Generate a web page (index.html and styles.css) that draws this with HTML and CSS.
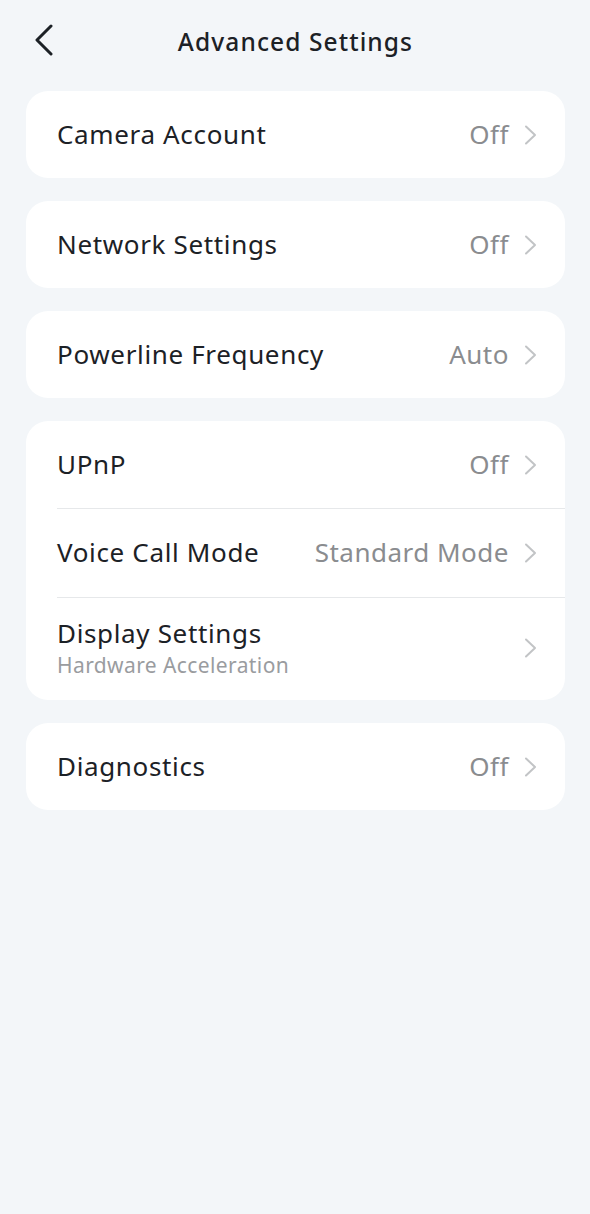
FILE: index.html
```html
<!DOCTYPE html>
<html>
<head>
<meta charset="utf-8">
<link rel="stylesheet" href="styles.css">
</head>
<body>
<div class="page">
  <header class="topbar">
    <svg class="back" width="20" height="32" viewBox="0 0 20 32"><path d="M17 2 L3 16 L17 30" fill="none" stroke="#1c2126" stroke-width="3" stroke-linecap="round" stroke-linejoin="round"/></svg>
    <h1 class="title">Advanced Settings</h1>
  </header>
  <main class="list">
    <section class="card">
      <div class="row"><span class="label">Camera Account</span><span class="value">Off</span><svg class="chev" width="14" height="20" viewBox="0 0 14 20"><path d="M2 1.5 L11 10 L2 18.5" fill="none" stroke="#c2c4c6" stroke-width="2" stroke-linecap="round" stroke-linejoin="round"/></svg></div>
    </section>
    <section class="card">
      <div class="row"><span class="label">Network Settings</span><span class="value">Off</span><svg class="chev" width="14" height="20" viewBox="0 0 14 20"><path d="M2 1.5 L11 10 L2 18.5" fill="none" stroke="#c2c4c6" stroke-width="2" stroke-linecap="round" stroke-linejoin="round"/></svg></div>
    </section>
    <section class="card">
      <div class="row"><span class="label">Powerline Frequency</span><span class="value">Auto</span><svg class="chev" width="14" height="20" viewBox="0 0 14 20"><path d="M2 1.5 L11 10 L2 18.5" fill="none" stroke="#c2c4c6" stroke-width="2" stroke-linecap="round" stroke-linejoin="round"/></svg></div>
    </section>
    <section class="card">
      <div class="row"><span class="label">UPnP</span><span class="value">Off</span><svg class="chev" width="14" height="20" viewBox="0 0 14 20"><path d="M2 1.5 L11 10 L2 18.5" fill="none" stroke="#c2c4c6" stroke-width="2" stroke-linecap="round" stroke-linejoin="round"/></svg></div>
      <div class="row divided"><span class="label">Voice Call Mode</span><span class="value">Standard Mode</span><svg class="chev" width="14" height="20" viewBox="0 0 14 20"><path d="M2 1.5 L11 10 L2 18.5" fill="none" stroke="#c2c4c6" stroke-width="2" stroke-linecap="round" stroke-linejoin="round"/></svg></div>
      <div class="row divided tall"><div class="stack"><span class="label">Display Settings</span><span class="sub">Hardware Acceleration</span></div><svg class="chev" width="14" height="20" viewBox="0 0 14 20"><path d="M2 1.5 L11 10 L2 18.5" fill="none" stroke="#c2c4c6" stroke-width="2" stroke-linecap="round" stroke-linejoin="round"/></svg></div>
    </section>
    <section class="card">
      <div class="row"><span class="label">Diagnostics</span><span class="value">Off</span><svg class="chev" width="14" height="20" viewBox="0 0 14 20"><path d="M2 1.5 L11 10 L2 18.5" fill="none" stroke="#c2c4c6" stroke-width="2" stroke-linecap="round" stroke-linejoin="round"/></svg></div>
    </section>
  </main>
</div>
</body>
</html>
```
FILE: styles.css
```css
html, body {
  margin: 0;
  padding: 0;
  background: #f3f6f9;
}
body {
  font-family: "Noto Sans", "Open Sans", sans-serif;
  color: #1c2126;
  width: 590px;
  min-height: 1214px;
}
.page {
  padding: 0 25px 0 26px;
}
.topbar {
  height: 82px;
  box-sizing: border-box;
  padding-top: 1px;
  display: flex;
  align-items: center;
  justify-content: center;
  position: relative;
}
.back {
  position: absolute;
  left: 8px;
  top: 24px;
}
.title {
  margin: 0;
  font-size: 24.5px;
  font-weight: 500;
  letter-spacing: 1.1px;
  line-height: 1.2;
}
.list {
  display: flex;
  flex-direction: column;
  gap: 23px;
  padding-top: 9px;
}
.card {
  background: #ffffff;
  border-radius: 22px;
  overflow: hidden;
}
.row {
  height: 87px;
  display: flex;
  align-items: center;
  padding: 0 27px 0 31px;
  box-sizing: border-box;
}
.row.divided {
  border-top: 1px solid #e6e8ea;
  margin-left: 31px;
  padding-left: 0;
  height: 89px;
}
.row.tall {
  height: 103px;
  padding-bottom: 2px;
}
.label {
  font-size: 26px;
  letter-spacing: 0.65px;
  flex: 1;
  white-space: nowrap;
  line-height: 1.2;
}
.value {
  font-size: 26px;
  letter-spacing: 0.5px;
  color: #8a8c8f;
  margin-right: 15px;
  line-height: 1.2;
}
.chev {
  flex: none;
}
.stack {
  flex: 1;
  display: flex;
  flex-direction: column;
}
.sub {
  font-size: 21px;
  letter-spacing: 0.4px;
  color: #9a9c9f;
  line-height: 1.2;
  margin-top: 3px;
}
```
